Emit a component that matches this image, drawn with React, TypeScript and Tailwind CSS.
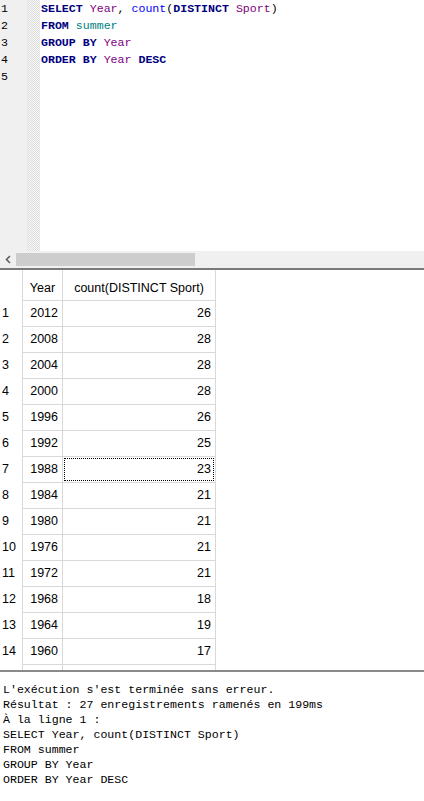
const rows: [number, number][] = [
  [2012, 26],
  [2008, 28],
  [2004, 28],
  [2000, 28],
  [1996, 26],
  [1992, 25],
  [1988, 23],
  [1984, 21],
  [1980, 21],
  [1976, 21],
  [1972, 21],
  [1968, 18],
  [1964, 19],
  [1960, 17],
];

const mono = "font-['Liberation_Mono','Courier_New',monospace]";
const sans = "font-['Liberation_Sans',Arial,sans-serif]";

function Kw({ children }: { children: React.ReactNode }) {
  return <span className="font-bold text-[#000080]">{children}</span>;
}

function Col({ children }: { children: React.ReactNode }) {
  return <span className="text-[#800080]">{children}</span>;
}

function Editor() {
  const lines = [
    <>
      <Kw>SELECT</Kw> <Col>Year</Col>, <span className="text-[#0000ff]">count</span>(
      <Kw>DISTINCT</Kw> <Col>Sport</Col>)
    </>,
    <>
      <Kw>FROM</Kw> <span className="text-[#008080]">summer</span>
    </>,
    <>
      <Kw>GROUP BY</Kw> <Col>Year</Col>
    </>,
    <>
      <Kw>ORDER BY</Kw> <Col>Year</Col> <Kw>DESC</Kw>
    </>,
    <></>,
  ];

  return (
    <div className="flex h-[251px] bg-white">
      <div className={`w-[27px] bg-[#f0f0f0] text-[11.6px] leading-[17px] text-black ${mono}`}>
        {lines.map((_, i) => (
          <div key={i} className="pl-[1px]">
            {i + 1}
          </div>
        ))}
      </div>
      <div className="w-[13px] bg-[repeating-conic-gradient(#dcdcdc_0_25%,#f8f8f8_0_50%)] bg-[length:2px_2px]" />
      <div className={`flex-1 pl-[1px] text-[11.6px] leading-[17px] whitespace-pre text-black ${mono}`}>
        {lines.map((l, i) => (
          <div key={i} className="h-[17px]">
            {l}
          </div>
        ))}
      </div>
    </div>
  );
}

function Scrollbar() {
  return (
    <div className="flex h-[17px] items-center bg-[#f0f0f0]">
      <div className="flex w-[16px] justify-center">
        <svg width="6" height="9" viewBox="0 0 6 9">
          <path d="M5 1 L1.5 4.5 L5 8" fill="none" stroke="#606060" strokeWidth="1.6" />
        </svg>
      </div>
      <div className="h-[13px] w-[179px] bg-[#cdcdcd]" />
    </div>
  );
}

function Grid() {
  return (
    <div className={`h-[400px] overflow-hidden bg-white text-[12.5px] text-black ${sans}`}>
      <div className="flex h-[30px]">
        <div className="w-[22px]" />
        <div className="flex w-[40px] items-center justify-center border-l border-[#d9d9d9] pt-[6px]">Year</div>
        <div className="flex w-[154px] items-center justify-center border-x border-[#d9d9d9] pt-[6px]">
          count(DISTINCT Sport)
        </div>
      </div>
      {rows.map(([y, c], i) => (
        <div key={y} className="flex h-[26px]">
          <div className="flex w-[22px] items-center pl-[2px]">{i + 1}</div>
          <div className="flex w-[40px] items-center justify-end border-t border-l border-[#d9d9d9] pr-[4px]">
            {y}
          </div>
          <div className="flex w-[154px] border-x border-t border-[#d9d9d9] p-[1px]">
            <div
              className={`flex flex-1 items-center justify-end pr-[2px] ${
                i === 6 ? "border border-dotted border-black" : "border border-transparent"
              }`}
            >
              {c}
            </div>
          </div>
        </div>
      ))}
      <div className="flex h-[10px]">
        <div className="w-[22px]" />
        <div className="w-[40px] border-t border-l border-[#d9d9d9]" />
        <div className="w-[154px] border-x border-t border-[#d9d9d9]" />
      </div>
    </div>
  );
}

export default function App() {
  return (
    <div className="flex h-[801px] w-[424px] flex-col overflow-hidden bg-white">
      <Editor />
      <Scrollbar />
      <div className="h-[2px] bg-[#7a7a7a]" />
      <div className="h-[400px] shrink-0">
        <Grid />
      </div>
      <div className="h-[2px] bg-[#8a8a8a]" />
      <div className={`flex-1 whitespace-pre px-[3px] pt-[10px] text-[11.6px] leading-[15px] text-black ${mono}`}>
        <div>L'exécution s'est terminée sans erreur.</div>
        <div>Résultat : 27 enregistrements ramenés en 199ms</div>
        <div>À la ligne 1 :</div>
        <div>SELECT Year, count(DISTINCT Sport)</div>
        <div>FROM summer</div>
        <div>GROUP BY Year</div>
        <div>ORDER BY Year DESC</div>
      </div>
    </div>
  );
}
